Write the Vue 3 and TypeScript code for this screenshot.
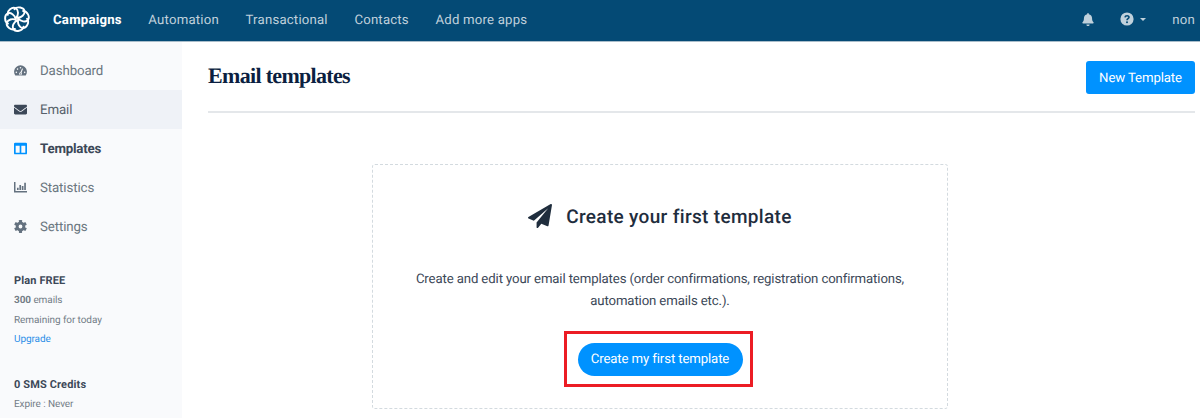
<script setup lang="ts">
interface NavItem {
  label: string
  icon: string
  state?: string
}

const apps: string[] = ['Campaigns', 'Automation', 'Transactional', 'Contacts', 'Add more apps']

const menu: NavItem[] = [
  { label: 'Dashboard', icon: 'gauge' },
  { label: 'Email', icon: 'mail', state: 'open' },
  { label: 'Templates', icon: 'columns', state: 'current' },
  { label: 'Statistics', icon: 'chart' },
  { label: 'Settings', icon: 'cog' },
]

const petals: number[] = Array.from({ length: 7 }, (_, i) => (i * 360) / 7)
const teeth: number[] = [0, 60, 120]
</script>

<template>
  <div class="page">
    <header class="topbar">
      <svg class="logo" viewBox="-13 -13 26 26">
        <g v-for="a in petals" :key="a" :transform="`rotate(${a})`">
          <path d="M-2.500 -9.800 C0 -13 7 -11.800 7.600 -7.600 C7.900 -4.600 4.600 -1.200 .3 -1.300" />
        </g>
      </svg>
      <nav class="apps">
        <a v-for="(app, i) in apps" :key="app" :class="{ active: i === 0 }">{{ app }}</a>
      </nav>
      <div class="tools">
        <svg class="bell" viewBox="0 0 448 512">
          <path d="M224 512c35.32 0 63.97-28.65 63.97-64H160.03c0 35.35 28.65 64 63.97 64zm215.39-149.71c-19.32-20.76-55.47-51.99-55.47-154.29 0-77.7-54.48-139.9-127.94-155.16V32c0-17.67-14.32-32-31.98-32s-31.98 14.33-31.98 32v20.84C118.56 68.1 64.08 130.3 64.08 208c0 102.3-36.15 133.53-55.47 154.29-6 6.45-8.66 14.16-8.61 21.71.11 16.4 12.98 32 32.1 32h383.8c19.12 0 32-15.6 32.1-32 .05-7.55-2.61-15.27-8.61-21.71z" />
        </svg>
        <svg class="help" viewBox="0 0 14 14">
          <circle cx="7" cy="7" r="6.6" />
          <path d="M5 5.4C5.2 3.2 9 3.2 9 5.3C9 6.7 7 6.7 7 8.2" fill="none" stroke="#044a75" stroke-width="1.6" />
          <circle cx="7" cy="10.2" r="1" fill="#044a75" />
        </svg>
        <i class="caret"></i>
        <span class="user">non</span>
      </div>
    </header>

    <div class="body">
      <aside class="sidebar">
        <ul class="menu">
          <li v-for="item in menu" :key="item.label" :class="item.state">
            <svg v-if="item.icon === 'gauge'" viewBox="0 0 14 14">
              <path d="M1.4 12.4A6.9 6.9 0 1 1 12.6 12.4Z" />
              <g fill="#f9fafc">
                <circle cx="2.5" cy="9" r=".85" /><circle cx="3.8" cy="5.5" r=".85" />
                <circle cx="7" cy="4" r=".85" /><circle cx="11.5" cy="9" r=".85" />
                <circle cx="7" cy="10.6" r="1.5" />
              </g>
              <path d="M7 10.5L9.2 5" stroke="#f9fafc" stroke-width="1.2" />
              <circle cx="7" cy="10.7" r=".7" />
            </svg>
            <svg v-else-if="item.icon === 'mail'" viewBox="0 0 512 512">
              <path d="M502.3 190.8c3.9-3.1 9.7-.2 9.7 4.7V400c0 26.5-21.5 48-48 48H48c-26.5 0-48-21.5-48-48V195.6c0-5 5.7-7.8 9.7-4.7 22.4 17.4 52.1 39.5 154.1 113.6 21.1 15.4 56.7 47.8 92.2 47.6 35.7.3 72-32.8 92.3-47.6 102-74.1 131.6-96.3 154-113.7zM256 320c23.2.4 56.6-29.2 73.4-41.4 132.7-96.3 142.8-104.7 173.4-128.7 5.8-4.5 9.2-11.5 9.2-18.9v-19c0-26.5-21.5-48-48-48H48c-26.5 0-48 21.5-48 48v19c0 7.4 3.4 14.3 9.2 18.9 30.6 23.9 40.7 32.4 173.4 128.7 16.8 12.2 50.2 41.8 73.4 41.4z" />
            </svg>
            <svg v-else-if="item.icon === 'columns'" viewBox="0 0 14 14">
              <path fill-rule="evenodd" d="M1.300 .7H12.700Q14 .7 14 2V12Q14 13.300 12.700 13.300H1.300Q0 13.300 0 12V2Q0 .7 1.300 .7ZM1.800 4V11.500H6.100V4ZM7.900 4V11.500H12.200V4Z" />
            </svg>
            <svg v-else-if="item.icon === 'chart'" viewBox="0 0 14 14">
              <path d="M0 1H1.600V10.900H14V12.500H0ZM3.200 7.300H5V9.700H3.200ZM5.800 4.200H7.600V9.700H5.800ZM8.400 5.500H10.200V9.700H8.400ZM11 1.900H12.800V9.700H11Z" />
            </svg>
            <svg v-else viewBox="-7 -7 14 14">
              <circle r="3.600" fill="none" stroke="currentColor" stroke-width="3.100" />
              <rect v-for="t in teeth" :key="t" x="-1.7" y="-6.900" width="3.400" height="3" rx=".5" :transform="`rotate(${t})`" />
              <rect v-for="t in teeth" :key="t + 180" x="-1.7" y="-6.900" width="3.400" height="3" rx=".5" :transform="`rotate(${t + 180})`" />
            </svg>
            <span>{{ item.label }}</span>
          </li>
        </ul>
        <section class="plan">
          <h2>Plan FREE</h2>
          <p><b>300</b> emails</p>
          <p>Remaining for today</p>
          <p><a>Upgrade</a></p>
        </section>
        <section class="plan">
          <h2>0 SMS Credits</h2>
          <p>Expire : Never</p>
        </section>
      </aside>

      <main class="content">
        <div class="heading">
          <h1>Email templates</h1>
          <button class="new">New Template</button>
        </div>
        <div class="empty">
          <h3>
            <svg class="plane" viewBox="0 0 1792 1792">
              <path d="M1764 11q33 24 27 64l-256 1536q-5 29-32 45-14 8-31 8-11 0-24-5l-453-185-242 295q-18 23-49 23-13 0-22-4-19-7-30.500-23.500t-11.500-36.500v-349l864-1059-1069 925-395-162q-37-14-40-55-2-40 32-59l1664-960q15-9 32-9 20 0 36 11z" />
            </svg>
            <span>Create your first template</span>
          </h3>
          <p class="desc">
            Create and edit your email templates (order confirmations, registration confirmations,<br />
            automation emails etc.).
          </p>
          <div class="highlight">
            <button class="create">Create my first template</button>
          </div>
        </div>
      </main>
    </div>
  </div>
</template>

<style>
body {
  overflow: hidden;
}
</style>

<style scoped>
.page {
  height: 418px;
  overflow: hidden;
  background: #fff;
  font-family: Roboto, 'Liberation Sans', sans-serif;
  text-rendering: geometricPrecision;
  color: #1f2d3d;
}
svg {
  display: block;
  flex: none;
  fill: currentColor;
}
h1, h2, h3, p, ul {
  margin: 0;
  padding: 0;
}
.topbar {
  box-sizing: border-box;
  height: 42px;
  display: flex;
  align-items: center;
  padding: 0 5px 3px 4px;
  background: #044a75;
  border-bottom: 1px solid #a9bdca;
  color: #c0d1dc;
  font-size: 13.2px;
}
.logo {
  width: 26px;
  height: 26px;
  fill: none;
  stroke: #fff;
  stroke-width: 1.9;
  stroke-linecap: round;
}
.apps {
  display: flex;
  gap: 26.600px;
  margin-left: 23px;
  padding-top: 2px;
  letter-spacing: 0.2px;
}
.apps .active {
  color: #fff;
  font-weight: 700;
  letter-spacing: 0.220px;
}
.tools {
  display: flex;
  align-items: center;
  margin-left: auto;
}
.bell {
  width: 12px;
  height: 13px;
}
.help {
  width: 14px;
  height: 14px;
  margin-left: 26px;
}
.caret {
  margin-left: 6px;
  border: 3px solid transparent;
  border-top-color: currentColor;
  border-bottom: 0;
}
.user {
  margin-left: 26px;
  padding-top: 2px;
  letter-spacing: 0.2px;
}
.body {
  display: flex;
  height: 376px;
}
.sidebar {
  box-sizing: border-box;
  width: 182px;
  flex: none;
  padding-top: 9.500px;
  background: #f9fafc;
}
.menu {
  list-style: none;
  font-size: 13.300px;
  letter-spacing: -0.120px;
  color: #6b7780;
}
.menu li {
  box-sizing: border-box;
  height: 38.800px;
  display: flex;
  align-items: center;
  padding: 0 14px;
  gap: 13px;
}
.menu span {
  padding-top: 2px;
}
.menu svg {
  width: 13px;
  height: 13px;
  color: #64717f;
}
.menu .open {
  background: #eff2f7;
  color: #57616b;
}
.menu .open svg {
  color: #3c4858;
}
.menu .current {
  color: #3c4858;
  font-weight: 700;
  letter-spacing: -0.200px;
}
.menu .current svg {
  color: #0092ff;
}
.plan {
  margin: 26px 14px 0;
  font-size: 10px;
  letter-spacing: -0.080px;
  line-height: 19.500px;
  color: #737d87;
}
.plan + .plan {
  margin-top: 25px;
}
.plan h2 {
  font-size: 11px;
  letter-spacing: 0.130px;
  line-height: 20px;
  color: #3c4858;
}
.plan a {
  color: #2c8fe8;
}
.content {
  flex: 1;
  min-width: 0;
  padding: 18px 5px 0 26px;
}
.heading {
  box-sizing: border-box;
  height: 53px;
  display: flex;
  justify-content: space-between;
  align-items: flex-start;
  border-bottom: 2px solid #e4e7ea;
}
h1 {
  padding-top: 4px;
  font: 700 22px/24px 'Liberation Serif', serif;
  letter-spacing: -0.680px;
  color: #0b1f41;
}
button {
  border: 0;
  padding: 1px 0 0;
  font: 13.200px Roboto, 'Liberation Sans', sans-serif;
  letter-spacing: -0.120px;
  text-rendering: geometricPrecision;
  color: #fff;
  background: #0092ff;
  white-space: nowrap;
}
.new {
  width: 109px;
  height: 33px;
  margin-top: 1px;
  border-radius: 3px;
}
.empty {
  box-sizing: border-box;
  width: 576px;
  height: 245px;
  margin: 51px 0 0 164px;
  padding-top: 38px;
  display: flex;
  flex-direction: column;
  align-items: center;
  border: 1px dashed #d3dadf;
  border-radius: 3px;
}
h3 {
  display: flex;
  align-items: center;
  gap: 14px;
  height: 26px;
  font-size: 19px;
  font-weight: 500;
  letter-spacing: 0.330px;
}
.plane {
  width: 24px;
  height: 24px;
}
.desc {
  margin-top: 40px;
  font-size: 13.200px;
  letter-spacing: -0.125px;
  line-height: 21.500px;
  text-align: center;
  white-space: nowrap;
  color: #3c4858;
}
.highlight {
  box-sizing: border-box;
  width: 189px;
  height: 56px;
  margin: 19px 0 0 -4px;
  padding-left: 4px;
  display: flex;
  align-items: center;
  justify-content: center;
  border: 3px solid #ec1c24;
}
.create {
  width: 165px;
  height: 33px;
  border-radius: 17px;
}
</style>
